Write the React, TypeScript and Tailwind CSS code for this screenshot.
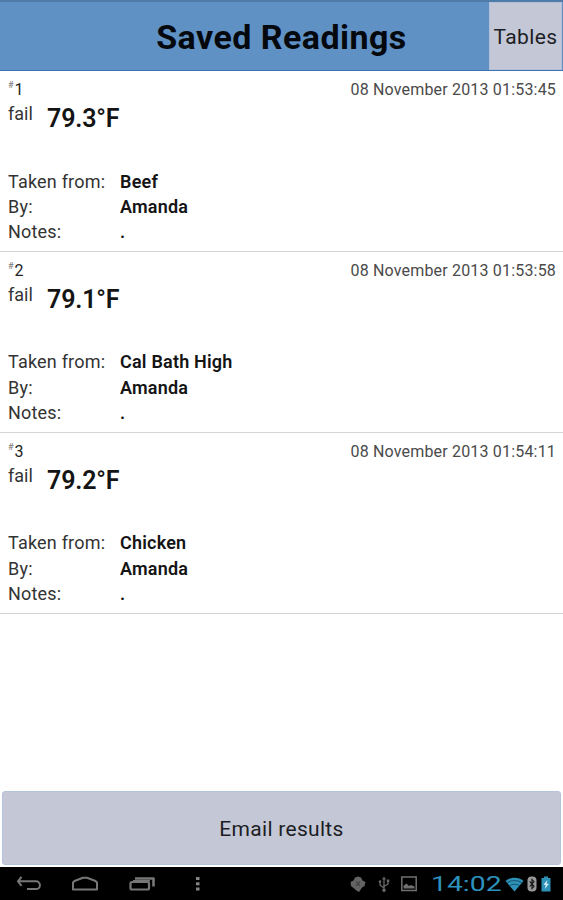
type Reading = {
  id: number
  status: string
  temperature: string
  date: string
  takenFrom: string
  by: string
  notes: string
}

const readings: Reading[] = [
  {
    id: 1,
    status: "fail",
    temperature: "79.3°F",
    date: "08 November 2013 01:53:45",
    takenFrom: "Beef",
    by: "Amanda",
    notes: ".",
  },
  {
    id: 2,
    status: "fail",
    temperature: "79.1°F",
    date: "08 November 2013 01:53:58",
    takenFrom: "Cal Bath High",
    by: "Amanda",
    notes: ".",
  },
  {
    id: 3,
    status: "fail",
    temperature: "79.2°F",
    date: "08 November 2013 01:54:11",
    takenFrom: "Chicken",
    by: "Amanda",
    notes: ".",
  },
]

function Header() {
  return (
    <header className="flex h-[71px] shrink-0 border-t-2 border-b border-t-[#4f7ba8] border-b-[#3f72b5] bg-[#5f91c5]">
      <div className="w-[74px] shrink-0" />
      <h1 className="flex-1 pt-[13px] text-center text-[34px] leading-[44px] font-bold tracking-[0.45px] text-[#05080c]">
        Saved Readings
      </h1>
      <button className="mr-px w-[73px] shrink-0 border border-[#b3bfd6] bg-[#c4c8d6] pt-[3px] text-[21px] tracking-[0.4px] whitespace-nowrap text-[#1c1e24]">
        Tables
      </button>
    </header>
  )
}

function Detail({ label, value }: { label: string; value: string }) {
  return (
    <div className="flex h-[25.4px] items-center text-lg">
      <dt className="w-[112px] tracking-[0.2px] text-[#333]">{label}</dt>
      <dd className="font-semibold tracking-[0.2px] text-[#141414]">{value}</dd>
    </div>
  )
}

function ReadingRow({ reading }: { reading: Reading }) {
  return (
    <li className="h-[180.9px] border-b border-[#d4d4d4] px-2 pt-2">
      <div className="flex h-[22px] items-center justify-between">
        <div className="flex text-[#222]">
          <span className="pt-px text-[9px] leading-none text-[#777]">#</span>
          <span className="ml-px text-base leading-5">{reading.id}</span>
        </div>
        <span className="-mr-px text-base tracking-[0.18px] text-[#4a4a4a]">
          {reading.date}
        </span>
      </div>
      <div className="flex h-[67.8px] pt-px">
        <span className="w-[39px] text-lg leading-6 text-[#333]">
          {reading.status}
        </span>
        <span className="text-[25px] leading-[34px] font-semibold tracking-[-0.15px] text-[#141414]">
          {reading.temperature}
        </span>
      </div>
      <dl>
        <Detail label="Taken from:" value={reading.takenFrom} />
        <Detail label="By:" value={reading.by} />
        <Detail label="Notes:" value={reading.notes} />
      </dl>
    </li>
  )
}

function BackIcon() {
  return (
    <svg width="26" height="16" viewBox="0 0 26 16" fill="none" stroke="#777" strokeWidth="2">
      <path d="M5.5 0.8 2 5.3l3.5 4.500M2 5.300h18a3.900 3.900 0 0 1 0 7.800h-9" />
    </svg>
  )
}

function HomeIcon() {
  return (
    <svg width="28" height="16" viewBox="0 0 28 16" fill="none" stroke="#777" strokeWidth="2">
      <path d="M2 13.5V6.5L3.5 5 12 1.8h4L24.5 5 26 6.5v7z" strokeLinejoin="round" />
    </svg>
  )
}

function RecentIcon() {
  return (
    <svg width="28" height="16" viewBox="0 0 28 16" fill="none" stroke="#777">
      <rect x="1.5" y="6" width="18.5" height="7.5" rx="1.5" strokeWidth="2.2" />
      <path d="M6 2.500H24.500V10.500" strokeWidth="2.600" strokeLinejoin="round" />
      <path d="M4 4.800h17" strokeWidth="1.600" />
    </svg>
  )
}

function MenuIcon() {
  return (
    <svg width="6" height="16" viewBox="0 0 6 16" fill="#858585">
      <rect x="1" y="1" width="3.5" height="3" />
      <rect x="1" y="6.3" width="3.5" height="3" />
      <rect x="1" y="11.5" width="3.5" height="3" />
    </svg>
  )
}

function DebugIcon() {
  return (
    <svg width="16" height="17" viewBox="0 0 16 17" fill="#646464">
      <path d="M8 0.500 11 1.500 12.500 4.500 15.500 6 14.500 10 12 11.500 9 16 6.500 14.500 3.500 12 1 10 0.500 6 3.500 4.500 5 1.500z" />
      <path d="M6 5.5 10 10M10 5.5 6 10" stroke="#454545" strokeWidth="1.2" />
    </svg>
  )
}

function UsbIcon() {
  return (
    <svg width="12" height="17" viewBox="0 0 12 17" fill="none" stroke="#686868" strokeWidth="1.3">
      <path d="M6 3v11M6 12 2 9V6M6 10.5 10 8V5" />
      <path d="M6 0.5 8 3.5H4z" fill="#686868" stroke="none" />
      <circle cx="6" cy="14.3" r="1.7" fill="#686868" stroke="none" />
      <circle cx="2" cy="5.5" r="1.3" fill="#686868" stroke="none" />
      <rect x="8.8" y="3.5" width="2.5" height="2.5" fill="#686868" stroke="none" />
    </svg>
  )
}

function PictureIcon() {
  return (
    <svg width="16" height="16" viewBox="0 0 16 16" fill="none">
      <rect x="0.8" y="1" width="14.4" height="13.5" stroke="#707070" strokeWidth="1.5" />
      <path d="M2.500 12.500V9.800L5.500 7.500l2.500 2.500L10 9l3.500 1.500v2z" fill="#707070" />
    </svg>
  )
}

function WifiIcon() {
  return (
    <svg width="19" height="15" viewBox="0 0 19 15">
      <path d="M0.5 4C5.5-0.3 13.5-0.3 18.5 4L9.5 14.5z" fill="#2d91b8" />
      <path
        d="M1.800 6.200c4.500-3.500 10.900-3.500 15.400 0M4.200 9c3-2.300 7.600-2.300 10.600 0"
        fill="none"
        stroke="#0d4258"
        strokeWidth="0.8"
      />
    </svg>
  )
}

function BluetoothIcon() {
  return (
    <svg width="10" height="16" viewBox="0 0 10 16">
      <rect x="0.5" y="0.5" width="9" height="15" rx="4" fill="#999" />
      <path d="M2.700 5.300 7 10.300 5 12.500v-9L7 5.700 2.700 10.500" fill="none" stroke="#151515" strokeWidth="1.1" />
    </svg>
  )
}

function BatteryIcon() {
  return (
    <svg width="10" height="16" viewBox="0 0 10 16">
      <path d="M3 0.5h4v1.5h2.5v13.500h-9V2H3z" fill="#2d91b8" />
      <path d="M6.500 4 2.500 8.800h2.300L3.800 13 7.800 7.800H5.500z" fill="#dff4fb" />
    </svg>
  )
}

function SystemBar() {
  return (
    <footer className="flex h-[33px] shrink-0 items-center bg-black pt-px pr-3 pl-4">
      <div className="flex items-center">
        <BackIcon />
        <div className="ml-[29px]">
          <HomeIcon />
        </div>
        <div className="ml-[30px]">
          <RecentIcon />
        </div>
        <div className="ml-[38px]">
          <MenuIcon />
        </div>
      </div>
      <div className="ml-auto flex items-center">
        <DebugIcon />
        <div className="ml-[12px]">
          <UsbIcon />
        </div>
        <div className="ml-[11px]">
          <PictureIcon />
        </div>
        <div className="ml-[14px] w-[71px]">
          <span className="block w-max origin-left scale-x-[1.35] text-[21px] leading-6 font-normal text-[#2d91bd]">
            14:02
          </span>
        </div>
        <div className="ml-[3px]">
          <WifiIcon />
        </div>
        <div className="ml-[3px]">
          <BluetoothIcon />
        </div>
        <div className="ml-1">
          <BatteryIcon />
        </div>
      </div>
    </footer>
  )
}

export default function App() {
  return (
    <div className="flex h-screen w-full flex-col overflow-hidden bg-white font-['Roboto',sans-serif]">
      <Header />
      <ul className="flex-1">
        {readings.map((reading) => (
          <ReadingRow key={reading.id} reading={reading} />
        ))}
      </ul>
      <div className="shrink-0 px-0.5 pb-0.5">
        <button className="block h-[74px] w-full rounded-[3px] border border-[#b4c3da] bg-[#c4c8d6] pt-1 text-[21px] tracking-[0.3px] text-[#1c1e24]">
          Email results
        </button>
      </div>
      <SystemBar />
    </div>
  )
}
